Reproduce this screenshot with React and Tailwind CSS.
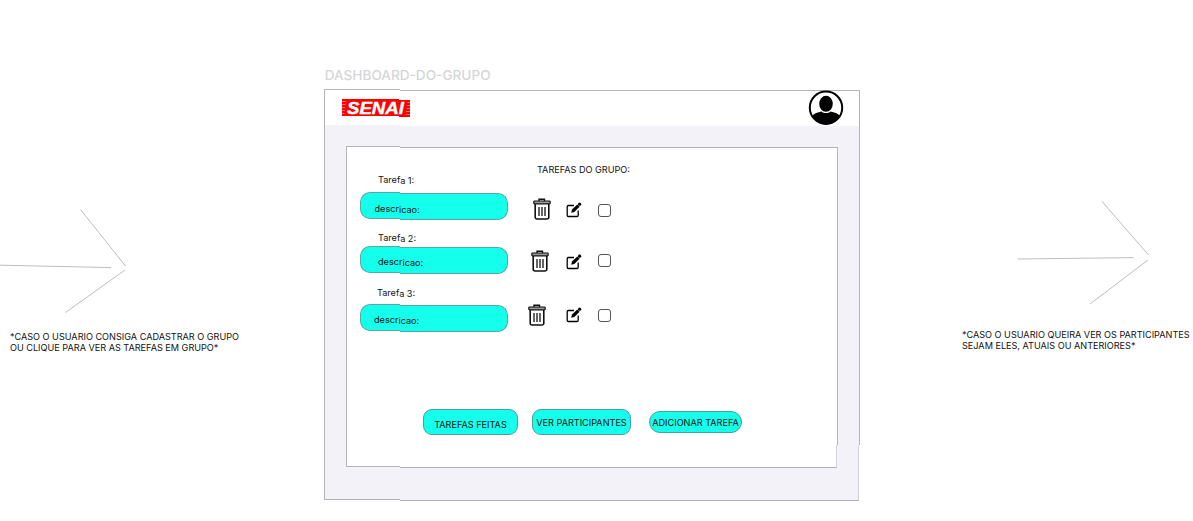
import React from "react";

const tasks = [
  {
    name: "1:", row: "mt-[28px]", label: "ml-[18px]", pill: "mt-[7px]", text: "pl-[14.5px] pt-[11px]",
    trash: "ml-[24.5px] mt-[23px]", edit: "ml-[15.5px] mt-[27px]", check: "ml-[16px] mt-[29px]",
  },
  {
    name: "2:", row: "mt-[13px]", label: "ml-[18px]", pill: "mt-[3px]", text: "pl-[18px] pt-[10px]",
    trash: "ml-[22.5px] mt-[17px]", edit: "ml-[17.5px] mt-[20.5px]", check: "ml-[16px] mt-[21px]",
  },
  {
    name: "3:", row: "mt-[14px]", label: "ml-[17px]", pill: "mt-[6px]", text: "pl-[14px] pt-[10px]",
    trash: "ml-[19.5px] mt-[16px]", edit: "ml-[20.5px] mt-[19px]", check: "ml-[16px] mt-[21px]",
  },
];

function FrameBackdrop() {
  return (
    <span aria-hidden="true" className="absolute inset-0 -z-10 flex">
      <span className="w-[76px] -translate-y-px border border-r-0 border-[#b5b5b7] bg-[#f3f2f8]">
        <span className="block h-[35px] bg-white" />
      </span>
      <span className="flex flex-1 flex-col">
        <span className="h-[355px] border border-b-0 border-l-0 border-[#b5b5b7] bg-[#f3f2f8]">
          <span className="block h-[35px] bg-white" />
        </span>
        <span className="mr-px flex-1 border border-l-0 border-t-0 border-b-[#b1b0b6] border-r-[#d3d2d8] bg-[#f3f2f8]" />
      </span>
    </span>
  );
}

function PanelBackdrop() {
  return (
    <span aria-hidden="true" className="absolute inset-0 -z-10 flex">
      <span className="w-[54px] -translate-y-px border border-r-0 border-[#b5b5b7] bg-white" />
      <span className="flex flex-1 flex-col">
        <span className="h-[298px] border border-b-0 border-l-0 border-[#b5b5b7] bg-white" />
        <span className="mr-px flex-1 border border-l-0 border-t-0 border-b-[#b1b0b6] border-r-[#d3d2d8] bg-white" />
      </span>
    </span>
  );
}

function Description({ className, textClass }) {
  return (
    <div className={`relative isolate h-[27px] w-[148px] ${className}`}>
      <span aria-hidden="true" className="absolute inset-0 -z-10 flex">
        <span className="w-[40px] -translate-y-px rounded-l-[10px] border border-r-0 border-[#5aa8a4] bg-[#14ffec]" />
        <span className="flex-1 rounded-r-[10px] border border-l-0 border-[#5aa8a4] bg-[#14ffec]" />
      </span>
      <p className={textClass}>
        <span className="relative -top-px">descr</span>icao:
      </p>
    </div>
  );
}

function Trash({ className }) {
  return (
    <svg className={`h-[22px] w-[18px] shrink-0 ${className}`} viewBox="0 0 18 22" fill="none" stroke="#111">
      <path d="M6 3V1.2h5.5V3" strokeWidth="1.4" />
      <rect x="0.8" y="3" width="16.4" height="2.8" rx="0.8" fill="#999" strokeWidth="1.2" />
      <path d="M2.2 6v13.2a1.8 1.8 0 0 0 1.8 1.8h10a1.8 1.8 0 0 0 1.8-1.8V6" strokeWidth="1.6" />
      <path d="M6 9v9M9 9v9M12 9v9" strokeWidth="1.3" />
    </svg>
  );
}

function Edit({ className }) {
  return (
    <svg className={`h-[16px] w-[16px] shrink-0 ${className}`} viewBox="0 0 16 16" fill="none" stroke="#000">
      <path d="M8 3.5H2.4a1.2 1.2 0 0 0-1.2 1.2v8.6a1.2 1.2 0 0 0 1.2 1.2H11a1.2 1.2 0 0 0 1.2-1.2V8.5" strokeWidth="1.3" />
      <path d="m5.2 10.8.8-3.200 5.300-5.200 2.300 2.300-5.300 5.200Z" fill="#000" stroke="none" />
      <circle cx="13.600" cy="2.200" r="1.600" fill="#000" stroke="none" />
    </svg>
  );
}

function Arrow({ className, shaft, top, bottom }) {
  return (
    <svg className={className} fill="none" stroke="#a0a0a0" strokeWidth="0.7">
      <path d={shaft} />
      <path d={top} />
      <path d={bottom} />
    </svg>
  );
}

function Logo() {
  return (
    <div className="relative isolate h-[17px] w-[68px]">
      <span aria-hidden="true" className="absolute inset-0 -z-10 flex">
        <span className="w-[57px] -translate-y-px bg-[#fe0000]" />
        <span className="flex-1 bg-[#fe0000]" />
      </span>
      <svg aria-hidden="true" className="absolute inset-0 h-[17px] w-[68px]" viewBox="0 0 68 17" stroke="#fff" strokeOpacity="0.6" strokeWidth="0.7">
        <path d="M0 1.500h4M0 4.500h3.600M0 7.500h3.200M0 10.500h2.800M0 13.500h2.400M65.500 2.500h2.500M65 5.500h3M64.500 8.500h3.500M64 11.500h4M63.500 14.500h4.500" />
      </svg>
      <svg className="absolute inset-0 h-[17px] w-[68px]" viewBox="0 0 68 17">
        <text x="5" y="13.500" textLength="57" lengthAdjust="spacingAndGlyphs" fill="#fff" stroke="#fff" strokeWidth="0.4" fontFamily="Liberation Sans, sans-serif" fontSize="17" fontWeight="700" fontStyle="italic">SENAI</text>
      </svg>
    </div>
  );
}

function Avatar() {
  return (
    <svg className="h-[36px] w-[36px]" viewBox="0 0 36 36">
      <circle cx="18" cy="17.700" r="16.200" fill="#fff" stroke="#000" strokeWidth="2" />
      <ellipse cx="18" cy="13.800" rx="6.800" ry="8" />
      <path d="M4 26c2-2.600 6-3.600 9.500-4.500 2 2 7 2 9 0 3.500.9 7.500 1.900 9.500 4.500-3 5.500-8.500 8.500-14 8.500S7 31.500 4 26Z" />
    </svg>
  );
}

function Action({ className, children }) {
  return (
    <button type="button" className={`flex items-center justify-center whitespace-nowrap border border-[#4aa09b] bg-[#14ffec] ${className}`}>
      {children}
    </button>
  );
}

export default function App() {
  return (
    <main className="flex h-[521px] w-[1193px] overflow-hidden bg-white font-['Inter',sans-serif] text-[9.12px] leading-[11px] text-[#111]">
      <aside className="w-[324px] shrink-0 pt-[200px]">
        <Arrow className="h-[120px] w-[130px]" shaft="M0 65.200 L111 67.600" top="M80.500 9.500 L125.500 66" bottom="M125 70 L65.500 112.500" />
        <p className="ml-[10px] mt-[11px] whitespace-nowrap">
          *CASO O USUARIO CONSIGA CADASTRAR O GRUPO
          <br />
          OU CLIQUE PARA VER AS TAREFAS EM GRUPO*
        </p>
      </aside>

      <section className="w-[536px] shrink-0 pt-[67px]">
        <h1 className="h-[23px] whitespace-nowrap pl-[0.7px] text-[13.6px] font-medium leading-[17px] text-[#d6d6d6]">DASHBOARD-DO-GRUPO</h1>
        <div className="relative isolate h-[411px]">
          <FrameBackdrop />
          <header className="flex h-[57px] items-start justify-between pl-[18px] pr-[16px]">
            <div className="pt-[10px]"><Logo /></div>
            <Avatar />
          </header>
          <div className="relative isolate ml-[22px] flex h-[321px] w-[492px] flex-col pl-[14px]">
            <PanelBackdrop />
            <div className="flex h-[262px]">
              <div>
                {tasks.map((t) => (
                  <div key={t.name} className={`flex items-start ${t.row}`}>
                    <div>
                      <p className={`whitespace-nowrap ${t.label}`}>
                        <span className="relative -top-px">Taref</span>a {t.name}
                      </p>
                      <Description className={t.pill} textClass={t.text} />
                    </div>
                    <Trash className={t.trash} />
                    <Edit className={t.edit} />
                    <span role="checkbox" aria-checked="false" className={`size-[13px] shrink-0 rounded-[3px] border border-[#555] bg-white ${t.check}`} />
                  </div>
                ))}
              </div>
              <h2 className="-ml-[74px] mt-[17px] h-[11px] whitespace-nowrap">TAREFAS DO GRUPO:</h2>
            </div>
            <div className="ml-[63px] flex items-start">
              <Action className="h-[26px] w-[95px] rounded-[9px] pt-[5px]">TAREFAS FEITAS</Action>
              <Action className="ml-[14px] h-[26px] w-[99px] rounded-[9px]">VER PARTICIPANTES</Action>
              <Action className="ml-[18px] mt-[2px] h-[22px] w-[93px] rounded-full">ADICIONAR TAREFA</Action>
            </div>
          </div>
        </div>
      </section>

      <aside className="flex-1 pt-[195px]">
        <Arrow className="ml-[140px] h-[120px] w-[160px]" shaft="M17.500 64 L133.500 62.600" top="M102 6.500 L148.500 60" bottom="M148 65 L90 109" />
        <p className="ml-[102px] mt-[14px] whitespace-nowrap">
          *CASO O USUARIO QUEIRA VER OS PARTICIPANTES
          <br />
          SEJAM ELES, ATUAIS OU ANTERIORES*
        </p>
      </aside>
    </main>
  );
}
